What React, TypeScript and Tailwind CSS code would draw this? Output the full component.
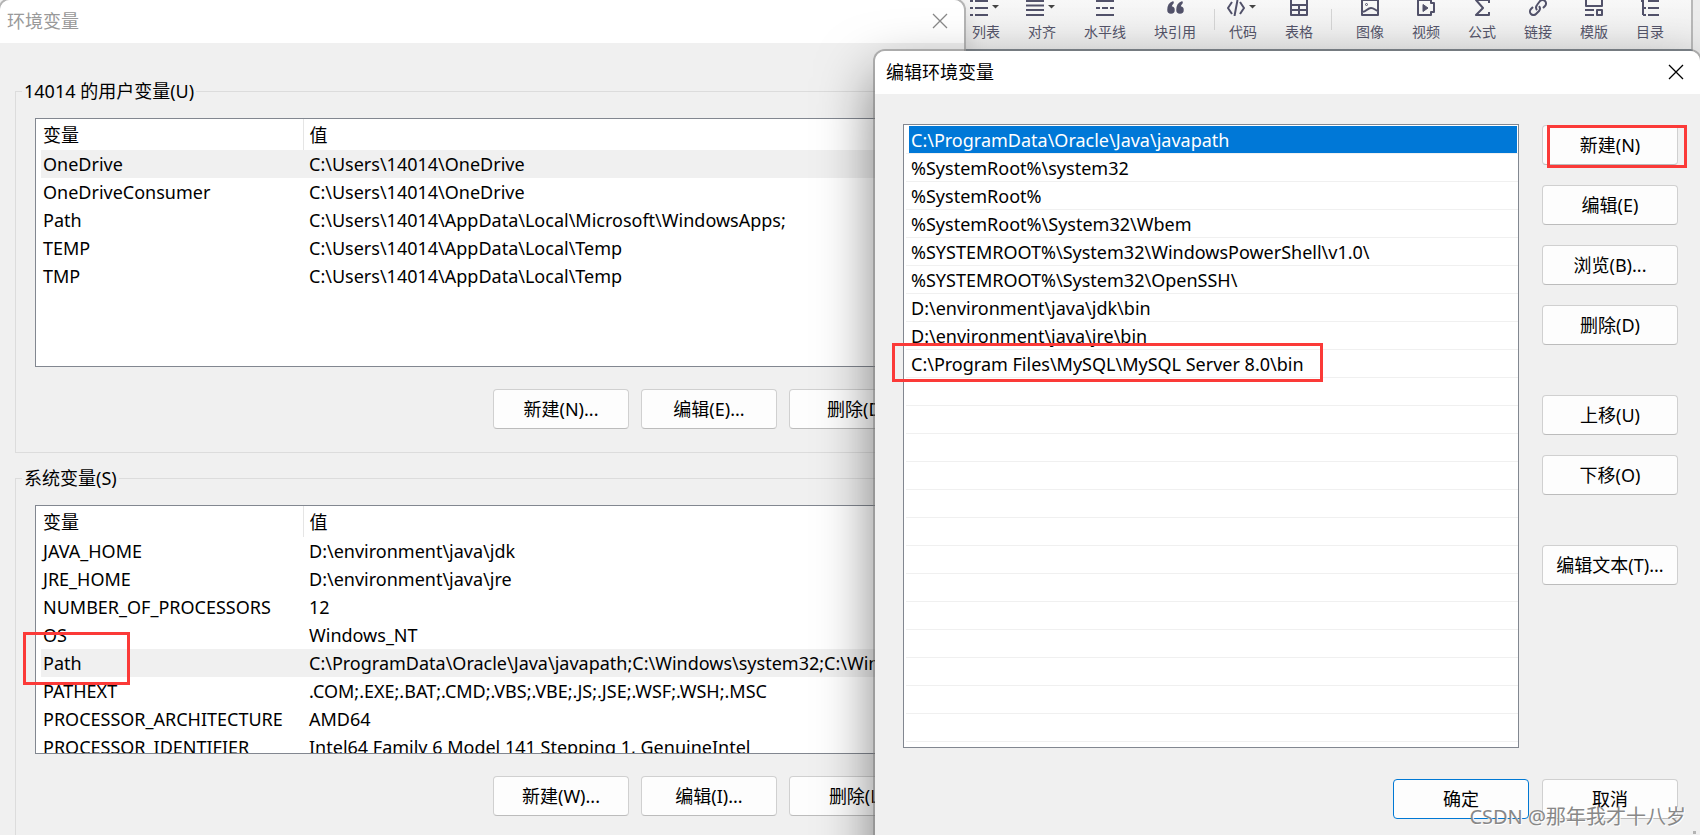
import type { ReactNode } from 'react';

const UI_FONT = "font-['Noto_Sans','Noto_Sans_CJK_SC',sans-serif]";

type Variable = { name: string; value: string };

const userVariables: Variable[] = [
  { name: 'OneDrive', value: 'C:\\Users\\14014\\OneDrive' },
  { name: 'OneDriveConsumer', value: 'C:\\Users\\14014\\OneDrive' },
  { name: 'Path', value: 'C:\\Users\\14014\\AppData\\Local\\Microsoft\\WindowsApps;' },
  { name: 'TEMP', value: 'C:\\Users\\14014\\AppData\\Local\\Temp' },
  { name: 'TMP', value: 'C:\\Users\\14014\\AppData\\Local\\Temp' },
];

const systemVariables: Variable[] = [
  { name: 'JAVA_HOME', value: 'D:\\environment\\java\\jdk' },
  { name: 'JRE_HOME', value: 'D:\\environment\\java\\jre' },
  { name: 'NUMBER_OF_PROCESSORS', value: '12' },
  { name: 'OS', value: 'Windows_NT' },
  { name: 'Path', value: 'C:\\ProgramData\\Oracle\\Java\\javapath;C:\\Windows\\system32;C:\\Windows;' },
  { name: 'PATHEXT', value: '.COM;.EXE;.BAT;.CMD;.VBS;.VBE;.JS;.JSE;.WSF;.WSH;.MSC' },
  { name: 'PROCESSOR_ARCHITECTURE', value: 'AMD64' },
  { name: 'PROCESSOR_IDENTIFIER', value: 'Intel64 Family 6 Model 141 Stepping 1, GenuineIntel' },
];

const paths = [
  'C:\\ProgramData\\Oracle\\Java\\javapath',
  '%SystemRoot%\\system32',
  '%SystemRoot%',
  '%SystemRoot%\\System32\\Wbem',
  '%SYSTEMROOT%\\System32\\WindowsPowerShell\\v1.0\\',
  '%SYSTEMROOT%\\System32\\OpenSSH\\',
  'D:\\environment\\java\\jdk\\bin',
  'D:\\environment\\java\\jre\\bin',
  'C:\\Program Files\\MySQL\\MySQL Server 8.0\\bin',
];

const ROW_COUNT = 22;

function Icon({ children }: { children: ReactNode }) {
  return (
    <svg width="18" height="18" viewBox="0 0 18 18" fill="none" stroke="#52526a" strokeWidth="2" strokeLinejoin="round" aria-hidden="true">
      {children}
    </svg>
  );
}

function Tool({ label, menu, children }: { label: string; menu?: boolean; children: ReactNode }) {
  return (
    <button type="button" className="flex flex-col items-center gap-1.5 px-3.5 text-sm leading-5 text-[#55556a]">
      <span className="-mx-1 flex items-center">
        <Icon>{children}</Icon>
        {menu && (
          <svg width="14" height="6" viewBox="0 0 14 6" aria-hidden="true">
            <path d="M4 1h7l-3.500 3.500z" fill="#444" />
          </svg>
        )}
      </span>
      <span className="whitespace-nowrap">{label}</span>
    </button>
  );
}

function Toolbar() {
  return (
    <header className="mr-[7px] flex h-[51px] items-start overflow-hidden border-b-2 border-r-2 border-b-[#7f8c98] border-r-[#b8b8b8] bg-linear-to-b from-[#f8f8f8] to-[#ececec] pl-[958px]">
      <div className="-mt-0.5 flex">
        <Tool label="列表" menu>
          <path d="M5 3h13M5 10h13M5 17h13" />
          <path d="M0 3h3M0 10h3M0 17h3" />
        </Tool>
        <Tool label="对齐" menu>
          <path d="M0 3h18M0 7.500h18M0 12h18M0 17h18" />
        </Tool>
        <Tool label="水平线">
          <path d="M0 3h18M0 17h18M0 10h4M6 10h6M14 10h4" />
        </Tool>
        <Tool label="块引用">
          <path d="M7 4C4 5 2 8 2 12a3 3 0 1 0 3-3c0-2 1-3 2-4zM16 4c-3 1-5 4-5 8a3 3 0 1 0 3-3c0-2 1-3 2-4z" fill="#52526a" strokeWidth="1.500" />
        </Tool>
        <span className="ml-1 mt-[11px] h-[21px] w-px bg-[#d4d4d4]" />
        <Tool label="代码" menu>
          <path d="M5 4L1 10l4 6M13 4l4 6-4 6M10.500 2l-3 16" />
        </Tool>
        <Tool label="表格">
          <path d="M1 1h16v16H1zM1 7h16M1 12h16M9 7v10" />
        </Tool>
        <span className="ml-1 mr-2.5 mt-[11px] h-[21px] w-px bg-[#d4d4d4]" />
        <Tool label="图像">
          <path d="M1 2h16v15H1zM1 14c5 0 5-4 9-4 3 0 4 2 7 3" />
          <circle cx="5.500" cy="6.500" r="1" strokeWidth="1" />
        </Tool>
        <Tool label="视频">
          <path d="M1 2h13v3h3v9h-3v3H1z" />
          <path d="M6 6.500l5 3.500-5 3.500z" fill="#52526a" strokeWidth="1" />
        </Tool>
        <Tool label="公式">
          <path d="M16 5V2H3l7 8-7 7h13v-3" />
        </Tool>
        <Tool label="链接">
          <path d="M8 12a4 4 0 0 1 0-5l3-4a3.500 3.500 0 0 1 5 5l-2 2M10 8a4 4 0 0 1 0 5l-3 3a3.500 3.500 0 0 1-5-5l2-2" />
        </Tool>
        <Tool label="模版">
          <path d="M1 1h16v7H1zM0 12h9M0 17h9M12 12h5v5h-5z" />
        </Tool>
        <Tool label="目录">
          <path d="M2 1v16M0 3h3M2 10h3M2 17h3M7 3h11M7 10h11M7 17h11" />
        </Tool>
      </div>
    </header>
  );
}

function Cross({ className }: { className: string }) {
  return (
    <svg width="16" height="16" viewBox="0 0 16 16" className={className} stroke="currentColor" strokeWidth="1.300" aria-hidden="true">
      <path d="M1 1l14 14M15 1L1 15" />
    </svg>
  );
}

function Highlight({ className }: { className: string }) {
  return <div className={`pointer-events-none absolute border-3 border-[#fb3a38] ${className}`} />;
}

function PushButton({ children, primary }: { children: ReactNode; primary?: boolean }) {
  return (
    <button
      type="button"
      className={
        primary
          ? 'h-10 w-[136px] rounded border border-[#0078d4] bg-[#fdfdfd] text-lg leading-6'
          : 'h-10 w-[136px] rounded border border-[#d0d0d0] border-b-[#bcbcbc] bg-[#fdfdfd] text-lg leading-6'
      }
    >
      {children}
    </button>
  );
}

function VariableGroup({ title, rows, selected, buttons }: { title: string; rows: Variable[]; selected: number; buttons: string[] }) {
  return (
    <fieldset className="border border-[#dcdcdc] px-1.5 pb-[23px]">
      <legend className="px-0.5 text-lg leading-6">{title}</legend>
      <div className="px-[13px] pt-[15px]">
        <div className="h-[249px] overflow-hidden border border-[#828790] bg-white pl-[5px]">
          <table className="w-full table-fixed text-left text-lg leading-7">
            <thead>
              <tr className="h-[31px]">
                <th className="w-[262px] border-r border-[#e5e5e5] pl-0.5 font-normal">变量</th>
                <th className="pl-1.5 font-normal">值</th>
              </tr>
            </thead>
            <tbody>
              {rows.map((row, i) => (
                <tr key={row.name} className={i === selected ? 'h-7 bg-[#f0f0f0]' : 'h-7'}>
                  <td className="whitespace-nowrap pl-0.5">{row.name}</td>
                  <td className="whitespace-nowrap pl-1.5">{row.value}</td>
                </tr>
              ))}
            </tbody>
          </table>
        </div>
        <div className="mt-[22px] flex justify-end gap-3">
          {buttons.map((label) => (
            <PushButton key={label}>{label}</PushButton>
          ))}
        </div>
      </div>
    </fieldset>
  );
}

function VariablesWindow() {
  return (
    <section className="absolute left-0 top-0 w-[964px] rounded-t-[10px] bg-[#f0f0f0] shadow-[0_0_0_2px_#b4b4b4,0_4px_24px_rgba(0,0,0,0.15)]">
      <div className="flex h-[43px] items-center justify-between rounded-t-[10px] bg-white pb-0.5 pl-[7px] pr-4">
        <h1 className="text-lg leading-6 text-[#999]">环境变量</h1>
        <button type="button" aria-label="关闭">
          <Cross className="text-[#888]" />
        </button>
      </div>
      <div className="flex flex-col gap-[13px] pb-20 pl-[15px] pr-[19px] pt-9">
        <VariableGroup title="14014 的用户变量(U)" rows={userVariables} selected={0} buttons={['新建(N)...', '编辑(E)...', '删除(D)']} />
        <VariableGroup title="系统变量(S)" rows={systemVariables} selected={4} buttons={['新建(W)...', '编辑(I)...', '删除(L)']} />
      </div>
      <Highlight className="left-[23px] top-[632px] h-[53px] w-[107px]" />
    </section>
  );
}

function EditWindow() {
  return (
    <section className="absolute left-[875px] right-0 top-[51px] h-screen rounded-t-[10px] bg-[#f0f0f0] shadow-[0_0_0_2px_rgba(120,120,120,0.5),0_24px_56px_rgba(0,0,0,0.5)]">
      <div className="flex h-[43px] items-center justify-between rounded-t-[10px] bg-white pb-0.5 pl-[11px] pr-4">
        <h2 className="text-lg leading-6">编辑环境变量</h2>
        <button type="button" aria-label="关闭">
          <Cross className="text-black" />
        </button>
      </div>
      <div className="pl-7 pr-[22px] pt-[30px]">
        <div className="flex gap-[23px]">
          <div className="relative flex-1">
            <ul className="border border-[#828790] bg-white pb-[5px] pl-0.5 pt-px text-lg leading-7">
              {Array.from({ length: ROW_COUNT }, (_, i) => (
                <li key={i} className="h-7 border-b border-[#f0f0f0] pl-[3px] pr-px">
                  <div className={i === 0 ? 'h-[27px] bg-[#0078d7] pl-0.5 text-white' : 'h-[27px] pl-0.5'}>{paths[i]}</div>
                </li>
              ))}
            </ul>
            <Highlight className="-left-[11px] top-[219px] h-[39px] w-[431px]" />
          </div>
          <div className="flex flex-col gap-5 pt-px">
            <div className="relative h-10">
              <PushButton>新建(N)</PushButton>
              <Highlight className="left-[5px] top-0 h-[43px] w-[140px]" />
            </div>
            <PushButton>编辑(E)</PushButton>
            <PushButton>浏览(B)...</PushButton>
            <PushButton>删除(D)</PushButton>
            <div className="flex flex-col gap-5 py-[30px]">
              <PushButton>上移(U)</PushButton>
              <PushButton>下移(O)</PushButton>
            </div>
            <PushButton>编辑文本(T)...</PushButton>
          </div>
        </div>
        <div className="mt-[31px] flex justify-end gap-[13px]">
          <PushButton primary>确定</PushButton>
          <PushButton>取消</PushButton>
        </div>
      </div>
    </section>
  );
}

export default function App() {
  return (
    <main className={`relative h-screen overflow-hidden bg-[#ececec] text-black ${UI_FONT}`}>
      <Toolbar />
      <VariablesWindow />
      <EditWindow />
      <p className="absolute bottom-1.5 right-3.5 text-xl leading-6 text-[#888] [text-shadow:1px_1px_0_#fff]">CSDN @那年我才十八岁</p>
      <span className="absolute bottom-px right-1 size-[3px] bg-[#b4b4b4]" />
    </main>
  );
}
